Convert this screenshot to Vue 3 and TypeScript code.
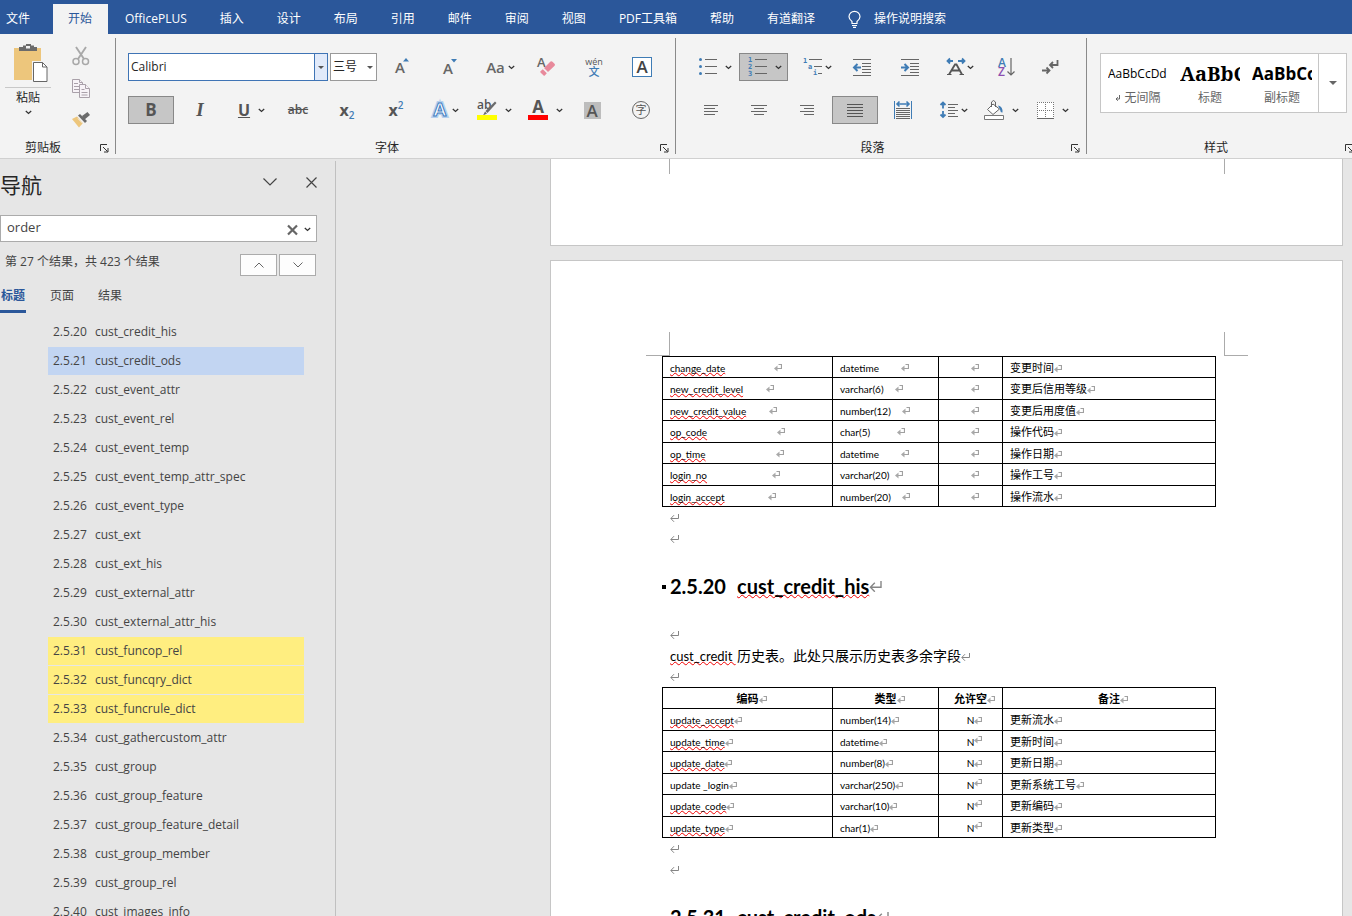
<script setup lang="ts">
import { ref } from 'vue'

interface FieldRow {
  name: string
  nameTab?: number
  type: string
  typeTab?: number
  nullable: string
  raised?: boolean
  remark: string
  plain?: boolean
}

const tabs = ['插入', '设计', '布局', '引用', '邮件', '审阅', '视图', 'PDF工具箱', '帮助', '有道翻译']
const fontName = ref('Calibri')
const fontSize = ref('三号')
const query = ref('order')

const outline: { no: string; name: string; state?: string }[] = [
  { no: '2.5.20', name: 'cust_credit_his' },
  { no: '2.5.21', name: 'cust_credit_ods', state: 'current' },
  { no: '2.5.22', name: 'cust_event_attr' },
  { no: '2.5.23', name: 'cust_event_rel' },
  { no: '2.5.24', name: 'cust_event_temp' },
  { no: '2.5.25', name: 'cust_event_temp_attr_spec' },
  { no: '2.5.26', name: 'cust_event_type' },
  { no: '2.5.27', name: 'cust_ext' },
  { no: '2.5.28', name: 'cust_ext_his' },
  { no: '2.5.29', name: 'cust_external_attr' },
  { no: '2.5.30', name: 'cust_external_attr_his' },
  { no: '2.5.31', name: 'cust_funcop_rel', state: 'hit' },
  { no: '2.5.32', name: 'cust_funcqry_dict', state: 'hit' },
  { no: '2.5.33', name: 'cust_funcrule_dict', state: 'hit' },
  { no: '2.5.34', name: 'cust_gathercustom_attr' },
  { no: '2.5.35', name: 'cust_group' },
  { no: '2.5.36', name: 'cust_group_feature' },
  { no: '2.5.37', name: 'cust_group_feature_detail' },
  { no: '2.5.38', name: 'cust_group_member' },
  { no: '2.5.39', name: 'cust_group_rel' },
  { no: '2.5.40', name: 'cust_images_info' },
]

const creditRows: FieldRow[] = [
  { name: 'change_date', nameTab: 104, type: 'datetime', typeTab: 61, nullable: '', remark: '变更时间' },
  { name: 'new_credit_level', nameTab: 96, type: 'varchar(6)', typeTab: 55, nullable: '', remark: '变更后信用等级' },
  { name: 'new_credit_value', nameTab: 99, type: 'number(12)', typeTab: 62, nullable: '', remark: '变更后用度值' },
  { name: 'op_code', nameTab: 107, type: 'char(5)', typeTab: 57, nullable: '', remark: '操作代码' },
  { name: 'op_time', nameTab: 106, type: 'datetime', typeTab: 61, nullable: '', remark: '操作日期' },
  { name: 'login_no', nameTab: 102, type: 'varchar(20)', typeTab: 55, nullable: '', remark: '操作工号' },
  { name: 'login_accept', nameTab: 98, type: 'number(20)', typeTab: 62, nullable: '', remark: '操作流水' },
]

const historyRows: FieldRow[] = [
  { name: 'update_accept', type: 'number(14)', nullable: 'N', remark: '更新流水' },
  { name: 'update_time', type: 'datetime', nullable: 'N', raised: true, remark: '更新时间' },
  { name: 'update_date', type: 'number(8)', nullable: 'N', remark: '更新日期' },
  { name: 'update _login', type: 'varchar(250)', nullable: 'N', raised: true, remark: '更新系统工号', plain: true },
  { name: 'update_code', type: 'varchar(10)', nullable: 'N', raised: true, remark: '更新编码' },
  { name: 'update_type', type: 'char(1)', nullable: 'N', raised: true, remark: '更新类型' },
]
</script>

<template>
  <div class="word">
    <svg class="defs" aria-hidden="true">
      <symbol id="ret" viewBox="0 0 8 8"><path d="M4.500 .5H7.500V4.500H1.500" fill="none" stroke="#a0a0a0" stroke-width="1.200" /><path d="M0 4.500 3.500 1.500V7.500z" fill="#a8a8a8" /></symbol>
      <symbol id="para" viewBox="0 0 9 8"><path d="M8.5 0v4.5H1M4 1.2.8 4.5 4 7.8" fill="none" stroke="#858585" /></symbol>
      <symbol id="chev" viewBox="0 0 7 5"><path d="M.8 1l2.7 2.4L6.2 1" fill="none" stroke="#333" stroke-width="1.3" /></symbol>
      <symbol id="launch" viewBox="0 0 9 9"><path d="M.5 7V.5H7M3 3l4.5 4.5M8 4v4H4" fill="none" stroke="#333" /></symbol>
    </svg>

    <nav class="tabs" aria-label="功能区">
      <button class="tab file">文件</button>
      <button class="tab active">开始</button>
      <button class="tab">OfficePLUS</button>
      <button v-for="t in tabs" :key="t" class="tab">{{ t }}</button>
      <button class="tab tell">
        <svg width="13" height="17" viewBox="0 0 13 17"><path d="M4 12.5v-2C2 9 1 8 1 5.800a5.500 5.500 0 0 1 11 0C12 8 11 9 9 10.500v2zM4 14.500h5M5 16.400h3" fill="none" stroke="#fff" stroke-width="1.200" /></svg>
        操作说明搜索
      </button>
    </nav>

    <section class="ribbon">
      <div class="group clipboard">
        <div class="clip-body">
          <button class="paste">
            <svg width="36" height="40" viewBox="0 0 36 40">
              <path d="M2 5h27v32H2z" fill="#edc67c" />
              <path d="M7 4h4V2.500h3V1h5v1.500h3V4h3v4H7z" fill="#6b6b6b" />
              <path d="M14 3h4v2.500h-4z" fill="#f3f3f3" />
              <path d="M20 18h12l5 5v18H20z" fill="#f3f3f3" />
              <path d="M21.500 19.500h9l4.500 4.500v14.500H21.500z" fill="#fff" stroke="#666" />
              <path d="M30.500 19.500V24H35" fill="none" stroke="#666" />
            </svg>
            <span class="paste-line"></span>
            <span>粘贴</span>
            <svg width="7" height="5"><use href="#chev" /></svg>
          </button>
          <div class="clip-tools">
            <button aria-label="剪切">
              <svg width="18" height="20" viewBox="0 0 18 20" fill="none" stroke="#a8a8a8" stroke-width="1.500">
                <path d="M4 1l8 12M14 1L6 13" stroke-width="1.900" /><circle cx="4" cy="15.500" r="3" /><circle cx="13.500" cy="15.500" r="3" />
              </svg>
            </button>
            <button aria-label="复制">
              <svg width="18" height="19" viewBox="0 0 18 19" fill="#f7f3f7" stroke="#a9a0a9">
                <path d="M.5 .5h7l3 3v10H.5z" /><path d="M7.500 .5v3h3M2 4.500h4M2 7.500h5M2 10.500h5" />
                <path d="M7.500 5.500h6l4 4v9h-10z" /><path d="M13.500 5.500v4h4M9.500 10.500h3M9.500 13.500h6M9.500 16h6" />
              </svg>
            </button>
            <button aria-label="格式刷">
              <svg width="18" height="16" viewBox="0 0 18 16">
                <path d="M0 7l5-2.500 6 6.500-4 4.500z" fill="#edc67c" /><path d="M6 3.500l2-1.500 7 7-2 2z" fill="#6b6b6b" /><path d="M10 4l5.500-4L18 3l-6 5z" fill="#6b6b6b" /><path d="M6 6.500l5 5" stroke="#f3f3f3" />
              </svg>
            </button>
          </div>
        </div>
        <div class="group-foot"><span class="group-name">剪贴板</span><button aria-label="剪贴板选项"><svg width="9" height="9"><use href="#launch" /></svg></button></div>
      </div>

      <div class="group font">
        <div class="row row-top">
          <div class="combo name">
            <select v-model="fontName" aria-label="字体"><option>Calibri</option></select>
            <span class="arrow"></span>
          </div>
          <div class="combo size">
            <select v-model="fontSize" aria-label="字号"><option>三号</option></select>
            <span class="arrow"></span>
          </div>
          <button class="tool" aria-label="增大字号"><svg width="14" height="18" viewBox="0 0 14 18"><text x="0" y="15" class="ga">A</text><path d="M8 3.500 11 0l3 3.500z" fill="#3f7cb5" /></svg></button>
          <button class="tool" aria-label="减小字号"><svg width="14" height="18" viewBox="0 0 14 18"><text x="0" y="16" class="ga">A</text><path d="M8 1h6l-3 3.500z" fill="#3f7cb5" /></svg></button>
          <button class="tool case-tool" aria-label="更改大小写"><span class="case">Aa</span><svg width="7" height="5"><use href="#chev" /></svg></button>
          <button class="tool" aria-label="清除格式">
            <svg width="19" height="20" viewBox="0 0 19 20"><text x="0" y="10" class="gs">A</text><path d="M7 11l6.500-6.500q1-.8 2 .2l2 2q1 1 .1 2L11 15z" fill="#e8899b" /><path d="M5.800 12.200l4 4-2 2.300q-.5.500-1.200 0L3.500 15.400q-.5-.6 0-1.200z" fill="#e8899b" /></svg>
          </button>
          <button class="tool pinyin" aria-label="拼音指南"><span>wén</span><b>文</b></button>
          <button class="tool" aria-label="字符边框"><span class="boxed">A</span></button>
        </div>
        <div class="row row-font">
          <button class="tool on bold">B</button>
          <button class="tool italic">I</button>
          <button class="tool nudged"><u class="under">U</u><svg class="far" width="7" height="5"><use href="#chev" /></svg></button>
          <button class="tool"><s class="strike">abc</s></button>
          <button class="tool script">x<sub>2</sub></button>
          <button class="tool script">x<sup>2</sup></button>
          <button class="tool" aria-label="文本效果">
            <svg width="18" height="20" viewBox="0 0 18 20"><text x="2" y="16" class="fx glow">A</text><text x="2" y="16" class="fx">A</text></svg>
            <svg width="7" height="5"><use href="#chev" /></svg>
          </button>
          <button class="tool" aria-label="突出显示">
            <svg width="20" height="20" viewBox="0 0 20 20"><text x="0" y="9" class="gh">ab</text><path d="M18 1.500l1.500 1.500-9 10-2-2z" fill="#6b6b6b" /><path d="M8 11.500l2 2-4 2z" fill="#6b6b6b" /><path d="M0 15h20v5H0z" fill="#ff0" /></svg>
            <svg class="far" width="7" height="5"><use href="#chev" /></svg>
          </button>
          <button class="tool nudged" aria-label="字体颜色">
            <svg width="20" height="20" viewBox="0 0 20 20"><text x="10" y="13" text-anchor="middle" class="gc">A</text><path d="M0 15h20v5H0z" fill="red" /></svg>
            <svg class="far" width="7" height="5"><use href="#chev" /></svg>
          </button>
          <button class="tool" aria-label="字符底纹"><span class="shaded">A</span></button>
          <button class="tool" aria-label="带圈字符"><span class="circled">字</span></button>
        </div>
        <div class="group-foot"><span class="group-name">字体</span><button aria-label="字体选项"><svg width="9" height="9"><use href="#launch" /></svg></button></div>
      </div>

      <div class="group para">
        <div class="row para-top">
          <button class="tool" aria-label="项目符号">
            <svg width="18" height="18" viewBox="0 0 18 18"><g fill="#3f7cb5"><circle cx="1.500" cy="1.500" r="1.500" /><circle cx="1.500" cy="8.500" r="1.500" /><circle cx="1.500" cy="15.500" r="1.500" /></g><path d="M6 1.500h12M6 8.500h12M6 15.500h12" stroke="#666" /></svg>
            <svg class="far" width="7" height="5"><use href="#chev" /></svg>
          </button>
          <button class="tool on" aria-label="编号">
            <svg width="19" height="18" viewBox="0 0 19 18"><g class="num"><text x="0" y="4">1</text><text x="0" y="11">2</text><text x="0" y="18">3</text></g><path d="M7 1.500h12M7 8.500h12M7 15.500h12" stroke="#666" /></svg>
            <svg class="far" width="7" height="5"><use href="#chev" /></svg>
          </button>
          <button class="tool" aria-label="多级列表">
            <svg width="19" height="19" viewBox="0 0 19 19"><g class="num"><text x="0" y="5">1</text><text x="5" y="11">a</text><text x="10" y="17">i</text></g><path d="M6 1.500h13M11 8.500h8M15 15.500h4" stroke="#666" /></svg>
            <svg width="7" height="5"><use href="#chev" /></svg>
          </button>
          <button class="tool" aria-label="减少缩进">
            <svg width="18" height="17" viewBox="0 0 18 17"><path d="M0 .5h18M9 4.500h9M9 7.500h9M9 10.500h9M9 13.500h9M0 16.500h18" stroke="#666" /><path d="M8 8.500H2M4.500 5 1 8.500 4.500 12" fill="none" stroke="#3f7cb5" stroke-width="2" /></svg>
          </button>
          <button class="tool" aria-label="增加缩进">
            <svg width="18" height="17" viewBox="0 0 18 17"><path d="M0 .5h18M9 4.500h9M9 7.500h9M9 10.500h9M9 13.500h9M0 16.500h18" stroke="#666" /><path d="M0 8.500h6M3.500 5 7 8.500 3.500 12" fill="none" stroke="#3f7cb5" stroke-width="2" /></svg>
          </button>
          <button class="tool" aria-label="中文版式">
            <svg width="20" height="18" viewBox="0 0 20 18"><path d="M7 3H2M4 .5 1.500 3 4 5.500M12 3h6M16 .5 18.500 3 16 5.500" fill="none" stroke="#3f7cb5" stroke-width="1.800" /><path d="M3 16.500 9 6.500h1.500L16 16.500M6 12.500h7.500" fill="none" stroke="#555" stroke-width="1.800" /><path d="M1 16.500h4.500M13.500 16.500H18" stroke="#555" stroke-width="1.200" /></svg>
            <svg width="7" height="5"><use href="#chev" /></svg>
          </button>
          <button class="tool" aria-label="排序">
            <svg width="17" height="19" viewBox="0 0 17 19"><text x="0" y="9" class="sort-a">A</text><text x="0" y="18" class="sort-z">Z</text><path d="M13 0v17M9.500 13.500 13 17l3.500-3.500" fill="none" stroke="#666" stroke-width="1.200" /></svg>
          </button>
          <button class="tool" aria-label="显示编辑标记">
            <svg width="17" height="15" viewBox="0 0 17 15"><path d="M15.500 0v5H8.500M11 2 8 5l3 3M0 10.500h7M4.500 7.500l3 3-3 3" fill="none" stroke="#666" stroke-width="1.800" /></svg>
          </button>
        </div>
        <div class="row para-row">
          <button class="tool" aria-label="左对齐"><svg width="14" height="11" viewBox="0 0 14 11"><path d="M0 .5h14M0 3.500h11M0 6.500h14M0 9.500h11" stroke="#666" /></svg></button>
          <button class="tool" aria-label="居中"><svg width="16" height="11" viewBox="0 0 16 11"><path d="M0 .5h16M3 3.500h10M0 6.500h16M3 9.500h10" stroke="#666" /></svg></button>
          <button class="tool" aria-label="右对齐"><svg width="14" height="11" viewBox="0 0 14 11"><path d="M0 .5h14M4 3.500h10M0 6.500h14M4 9.500h10" stroke="#666" /></svg></button>
          <button class="tool on" aria-label="两端对齐"><svg width="16" height="13" viewBox="0 0 16 13"><path d="M0 .5h16M0 3.500h16M0 6.500h16M0 9.500h16M0 12.500h16" stroke="#555" /></svg></button>
          <button class="tool" aria-label="分散对齐">
            <svg width="18" height="18" viewBox="0 0 18 18"><path d="M.5 0v18M17.500 0v18" stroke="#3f7cb5" /><path d="M3 3h12M5.500.5 3 3l2.500 2.500M12.500.5 15 3l-2.500 2.500" fill="none" stroke="#3f7cb5" stroke-width="1.600" /><path d="M2 7.500h14M2 9.500h14M2 11.500h14M2 13.500h14M2 15.500h14M2 17.500h14" stroke="#666" /></svg>
          </button>
          <button class="tool spacing" aria-label="行距">
            <svg width="18" height="18" viewBox="0 0 18 18"><path d="M3 1.500v6M.5 4 3 1.500 5.500 4M3 10v6M.5 13.500 3 16l2.500-2.500" fill="none" stroke="#3f7cb5" stroke-width="1.800" /><path d="M8 3.500h10M8 6.500h7M8 9.500h10M8 12.500h7M8 15.500h10" stroke="#666" /></svg>
            <svg width="7" height="5"><use href="#chev" /></svg>
          </button>
          <button class="tool nudged" aria-label="底纹">
            <svg width="20" height="20" viewBox="0 0 20 20"><path d="M3.500 9.500 9 4l6.500 5L9 14.500z" fill="#fff" stroke="#666" /><path d="M7.500 7V2q2-3 4 0v5" fill="none" stroke="#666" /><path d="M14 5.500q5 1 4.500 7-2 .5-2.500-3z" fill="#3f7cb5" /><path d="M.5 15.500h19v4H.5z" fill="#fff" stroke="#777" /></svg>
            <svg class="far" width="7" height="5"><use href="#chev" /></svg>
          </button>
          <button class="tool borders" aria-label="边框">
            <svg width="17" height="17" viewBox="0 0 17 17"><path d="M0 0h17v17H0z" fill="#fff" /><path d="M0 .5h17M0 8.500h17M.5 0v17M8.500 0v17M16.500 0v17" stroke="#777" stroke-dasharray="1 1" /><path d="M0 16.500h17" stroke="#666" /></svg>
            <svg class="far" width="7" height="5"><use href="#chev" /></svg>
          </button>
        </div>
        <div class="group-foot"><span class="group-name">段落</span><button aria-label="段落选项"><svg width="9" height="9"><use href="#launch" /></svg></button></div>
      </div>

      <div class="group styles">
        <div class="gallery">
          <button class="style"><span class="sample">AaBbCcDd</span><span class="style-name"><svg width="6" height="7" viewBox="0 0 6 7"><path d="M4.500 0v4H1M2.800 2.200 1 4l1.800 1.800" fill="none" stroke="#666" /></svg> 无间隔</span></button>
          <button class="style"><span class="sample title">AaBbCc</span><span class="style-name">标题</span></button>
          <button class="style"><span class="sample subtitle">AaBbCc</span><span class="style-name">副标题</span></button>
          <button class="more" aria-label="其他样式"><span class="arrow-big"></span></button>
        </div>
        <div class="group-foot"><span class="group-name">样式</span><button aria-label="样式选项"><svg width="9" height="9"><use href="#launch" /></svg></button></div>
      </div>
    </section>

    <div class="body">
      <aside class="pane">
        <header class="pane-head">
          <h1>导航</h1>
          <button aria-label="任务窗格选项"><svg width="14" height="8" viewBox="0 0 14 8"><path d="M.5.5 7 7 13.500.5" fill="none" stroke="#444" stroke-width="1.200" /></svg></button>
          <button aria-label="关闭"><svg width="11" height="11" viewBox="0 0 11 11"><path d="M.5.5l10 10M10.500.5l-10 10" stroke="#444" stroke-width="1.200" /></svg></button>
        </header>
        <div class="search">
          <input v-model="query" type="text" aria-label="搜索文档">
          <button aria-label="清除"><svg width="11" height="10" viewBox="0 0 11 10"><path d="M1 .5l9 9M10 .5l-9 9" stroke="#666" stroke-width="2.200" /></svg></button>
          <button aria-label="搜索选项"><svg width="7" height="5"><use href="#chev" /></svg></button>
        </div>
        <div class="found">
          <p>第 27 个结果，共 423 个结果</p>
          <button aria-label="上一个"><svg width="10" height="6" viewBox="0 0 10 6"><path d="M.5 5.500 5 1l4.500 4.500" fill="none" stroke="#666" /></svg></button>
          <button aria-label="下一个"><svg width="10" height="6" viewBox="0 0 10 6"><path d="M.5.5 5 5 9.500.5" fill="none" stroke="#666" /></svg></button>
        </div>
        <div class="views">
          <button class="sel">标题</button>
          <button>页面</button>
          <button>结果</button>
        </div>
        <ul class="outline">
          <li v-for="o in outline" :key="o.no"><a href="#" :class="o.state"><span>{{ o.no }}</span>{{ o.name }}</a></li>
        </ul>
      </aside>

      <main class="canvas">
        <article class="page prev">
          <div class="corners"><i></i><i></i></div>
        </article>
        <article class="page">
          <div class="corners"><i></i><i></i></div>
          <table>
            <colgroup><col class="c1"><col class="c2"><col class="c3"><col></colgroup>
            <tbody>
              <tr v-for="r in creditRows" :key="r.name">
                <td><span class="stop" :style="{ width: r.nameTab + 'px' }"><span class="typo">{{ r.name }}</span></span><svg class="ret up"><use href="#ret" /></svg></td>
                <td><span class="stop" :style="{ width: r.typeTab + 'px' }">{{ r.type }}</span><svg class="ret up"><use href="#ret" /></svg></td>
                <td class="mid"><svg class="ret up"><use href="#ret" /></svg></td>
                <td class="zh">{{ r.remark }}<svg class="ret"><use href="#ret" /></svg></td>
              </tr>
            </tbody>
          </table>
          <p class="line"><svg class="pm"><use href="#para" /></svg></p>
          <p class="line"><svg class="pm"><use href="#para" /></svg></p>
          <h2><span class="dot"></span><span class="no">2.5.20</span><span class="typo">cust_credit_his</span><svg class="hm"><use href="#para" /></svg></h2>
          <p class="line"><svg class="pm"><use href="#para" /></svg></p>
          <p class="line text"><span class="typo lead">cust_credit </span>历史表。此处只展示历史表多余字段<svg class="pm"><use href="#para" /></svg></p>
          <p class="line"><svg class="pm"><use href="#para" /></svg></p>
          <table>
            <colgroup><col class="c1"><col class="c2"><col class="c3"><col></colgroup>
            <thead>
              <tr><th v-for="h in ['编码', '类型', '允许空', '备注']" :key="h">{{ h }}<svg class="ret"><use href="#ret" /></svg></th></tr>
            </thead>
            <tbody class="shifted">
              <tr v-for="r in historyRows" :key="r.name">
                <td><span :class="{ typo: !r.plain }">{{ r.name }}</span><svg class="ret"><use href="#ret" /></svg></td>
                <td>{{ r.type }}<svg class="ret"><use href="#ret" /></svg></td>
                <td class="mid">{{ r.nullable }}<svg class="ret" :class="{ raised: r.raised }"><use href="#ret" /></svg></td>
                <td class="zh">{{ r.remark }}<svg class="ret"><use href="#ret" /></svg></td>
              </tr>
            </tbody>
          </table>
          <p class="line"><svg class="pm"><use href="#para" /></svg></p>
          <p class="line"><svg class="pm"><use href="#para" /></svg></p>
          <h2><span class="dot"></span><span class="no">2.5.31</span><span class="typo">cust_credit_ods</span><svg class="hm"><use href="#para" /></svg></h2>
        </article>
      </main>
    </div>
  </div>
</template>

<style>
body { margin: 0; }
</style>

<style scoped>
* { box-sizing: border-box; }
.word {
  height: 100vh;
  display: flex;
  flex-direction: column;
  overflow: hidden;
  background: #e6e6e6;
  color: #262626;
  font: 12px/16px "Open Sans", "Noto Sans CJK SC", sans-serif;
}
.defs { position: absolute; width: 0; height: 0; }
svg { flex: none; overflow: visible; }
button { border: 0; padding: 0; background: none; font: inherit; color: inherit; }
h1, h2, p, ul { margin: 0; padding: 0; }

.tabs { flex: none; display: flex; gap: 1px; height: 34px; padding-top: 4px; background: #2b579a; color: #fff; }
.tab { padding: 0 16px; white-space: nowrap; }
.tab.file { padding: 0 22px 0 6px; }
.tab.active { background: #f3f3f3; color: #2b579a; padding: 0 16px 0 15px; }
.tell { display: flex; align-items: center; gap: 13px; }

.ribbon { flex: none; display: flex; height: 125px; background: #f3f3f3; border-bottom: 1px solid #d0d0d0; overflow: hidden; }
.group { position: relative; flex: none; display: flex; flex-direction: column; gap: 15px; padding-top: 19px; }
.group:not(.styles)::after { content: ""; position: absolute; right: 0; top: 4px; bottom: 4px; width: 1px; background: #8a8a8a; }
.group-foot { display: flex; align-items: center; height: 16px; margin-top: auto; margin-bottom: 2px; }
.group-name { flex: 1; text-align: center; padding-right: 14px; }
.group-foot button { width: 16px; height: 16px; padding-top: 4px; display: flex; justify-content: flex-start; }
.clipboard { width: 116px; padding-top: 9px; gap: 0; }
.clip-body { display: flex; }
.paste { width: 56px; display: flex; flex-direction: column; align-items: center; color: #262626; }
.paste svg:first-child { margin-left: 3px; }
.paste-line { width: 46px; height: 1px; margin: 4px 0 2px; background: #c8c8c8; }
.paste svg:last-child { margin-top: 4px; }
.clip-tools { width: 50px; padding-top: 3px; display: flex; flex-direction: column; align-items: center; gap: 12px; }
.clip-tools button { display: flex; height: 20px; align-items: center; }

.row { display: flex; height: 28px; }
.tool { width: 46px; height: 28px; display: flex; align-items: center; justify-content: center; gap: 3px; color: #555; }
.tool.on { background: #c6c6c6; border: 1px solid #888; }
.tool.nudged { padding-left: 5px; }
.far { margin-left: 5px; }
.font { width: 560px; padding-left: 12px; }
.row-top { gap: 2px; }
.row-font { gap: 3px; }
.case-tool { padding-left: 5px; }
.combo { display: flex; background: #fff; border: 1px solid #999; }
.combo select { flex: 1; min-width: 0; border: 0; padding: 0 2px; background: none; appearance: none; color: #262626; font: inherit; }
.combo.name { width: 200px; border-color: #3f74b5; }
.combo.size { width: 47px; }
.arrow { width: 13px; display: grid; place-items: center; }
.combo.name .arrow { border-left: 1px solid #3f74b5; background: #e1eafa; }
.arrow::before, .arrow-big::before { content: ""; display: block; border: 3px solid transparent; border-top-color: #555; border-bottom: 0; }
.arrow-big::before { border-width: 4px; border-bottom: 0; border-top-color: #666; }
.ga { font: 600 15px "Open Sans", sans-serif; fill: #666; }
.gs { font: 600 13px "Open Sans", sans-serif; fill: #666; }
.gh { font: 600 12px "Open Sans", sans-serif; fill: #555; }
.gc { font: 700 17px "Open Sans", sans-serif; fill: #555; }
.fx { font: 700 19px "Liberation Sans", sans-serif; fill: #fff; stroke: #3f7cc0; stroke-width: 1px; }
.fx.glow { stroke: #b5d0ee; stroke-width: 4px; }
.case { font-size: 15px; font-weight: 600; color: #666; }
.pinyin { flex-direction: column; gap: 0; font-size: 9px; line-height: 9px; }
.pinyin b { color: #3f7cb5; font-size: 11px; line-height: 11px; font-weight: 500; }
.boxed { width: 20px; height: 20px; border: 1px solid #3f7cb5; background: #fff; font: 600 17px/18px "Open Sans", sans-serif; text-align: center; color: #444; }
.bold { font-size: 17px; font-weight: 700; }
.italic { font: italic 700 19px "Liberation Serif", serif; }
.under { font-size: 16px; font-weight: 700; }
.strike { font-size: 12px; font-weight: 600; }
.script { gap: 0; font-size: 16px; font-weight: 700; }
.script sub, .script sup { font-size: 10px; line-height: 10px; color: #3f7cb5; font-weight: 600; }
.script sub { align-self: flex-end; margin-bottom: 4px; }
.script sup { align-self: flex-start; margin-top: 4px; }
.shaded { width: 17px; height: 17px; background: #bdbdbd; font: 600 17px/17px "Open Sans", sans-serif; text-align: center; }
.circled { width: 18px; height: 18px; border: 1px solid #666; border-radius: 50%; font-size: 11px; line-height: 15px; text-align: center; }

.para { width: 411px; padding-left: 12px; }
.para-row { gap: 2px; }
.para-top { padding-left: 3px; }
.para-top .tool:nth-child(1) { width: 48px; }
.para-top .tool:nth-child(2) { width: 49px; padding-left: 3px; }
.para-top .tool:nth-child(3) { width: 52px; justify-content: flex-end; padding-right: 8px; }
.para-top .tool:nth-child(4) { width: 44px; }
.para-top .tool:nth-child(5) { width: 52px; }
.para-top .tool:nth-child(6) { width: 48px; gap: 1px; }
.para-top .tool:nth-child(n+7) { width: 44px; }
.tool.spacing { padding-left: 5px; }
.tool.borders { padding-left: 12px; }
.num { font: 700 7px "DejaVu Sans Mono", monospace; fill: #3f7cb5; }
.sort-a, .sort-z { font: 600 12px "Open Sans", sans-serif; fill: #3f7cb5; }
.sort-z { fill: #8b4fb0; }

.styles { flex: 1 0 274px; padding-left: 13px; }
.styles .group-foot { margin-left: -13px; }
.styles .group-name { padding-right: 0; }
.gallery { display: flex; width: 247px; height: 60px; padding-left: 1px; border: 1px solid #c6c6c6; background: #fff; }
.style { width: 72px; padding: 1px 6px 0; display: flex; flex-direction: column; align-items: center; }
.sample { width: 60px; height: 34px; overflow: hidden; white-space: nowrap; color: #000; font: 12px/38px "Open Sans", sans-serif; text-align: left; }
.sample.title { font: 700 20px/38px "Noto Serif", "Liberation Serif", serif; }
.sample.subtitle { font: 700 17px/38px "Open Sans", sans-serif; }
.style-name { color: #666; line-height: 18px; white-space: nowrap; }
.more { flex: 1; border-left: 1px solid #c6c6c6; display: grid; place-items: center; }

.body { flex: 1; min-height: 0; display: flex; }
.pane { flex: none; width: 336px; margin-top: 2px; border-right: 1px solid #c0c0c0; overflow: hidden; color: #444; }
.pane-head { display: flex; align-items: center; height: 54px; padding: 0 18px 12px 0; }
.pane-head h1 { flex: 1; padding-top: 6px; font-size: 21px; line-height: 28px; font-weight: 400; color: #262626; }
.pane-head button { display: flex; margin-left: 29px; }
.search { display: flex; align-items: center; width: 317px; height: 27px; padding-right: 5px; background: #fff; border: 1px solid #ababab; }
.search input { flex: 1; min-width: 0; height: 22px; border: 0; padding: 0 6px 3px; outline: 0; font: inherit; font-size: 13px; color: #444; background: none; }
.search button { display: flex; margin-left: 6px; padding-top: 2px; }
.found { display: flex; gap: 2px; width: 316px; height: 34px; padding-top: 12px; }
.found p { flex: 1; padding-left: 5px; line-height: 16px; }
.found button { width: 37px; height: 22px; display: grid; place-items: center; background: #fdfdfd; border: 1px solid #ababab; }
.views { display: flex; gap: 24px; height: 37px; padding-top: 10px; }
.views button { height: 27px; padding-bottom: 7px; }
.views .sel { color: #2b579a; font-weight: 700; border-bottom: 3px solid #2b579a; padding: 0 1px 4px 1px; }
.outline { list-style: none; margin: 5px 31px 0 48px; }
.outline li { margin-bottom: 1px; }
.outline a { display: block; height: 28px; padding-left: 5px; line-height: 27px; color: #444; text-decoration: none; white-space: nowrap; }
.outline a span { display: inline-block; width: 42px; }
.outline .current { background: #c2d5f2; }
.outline .hit { background: #ffee80; }

.canvas { flex: 1; min-width: 0; overflow: hidden; }
.page { width: 793px; margin: 0 9px 0 auto; padding: 71px 0 40px; background: #fff; border: 1px solid #c6c6c6; }
.prev { height: 87px; margin-bottom: 14px; padding: 0; border-top: 0; }
.corners { display: flex; justify-content: space-between; margin: 0 94px 0 95px; }
.corners i { width: 24px; height: 24px; border: solid #ababab; border-width: 0 1px 1px 0; }
.corners i:last-child { border-width: 0 0 1px 1px; }
.prev .corners i { height: 15px; border-bottom: 0; }
table { width: 554px; margin-left: 111px; table-layout: fixed; border-collapse: collapse; color: #000; font: 10px/14px Lato, "Noto Sans CJK SC", sans-serif; }
.c1 { width: 170px; }
.c2 { width: 106px; }
.c3 { width: 64px; }
td, th { height: 21px; padding: 4px 7px 0; border: 1px solid #000; text-align: left; vertical-align: top; white-space: nowrap; }
tr:nth-child(even) td, .shifted tr:nth-child(odd) td { height: 22px; }
.shifted tr:nth-child(even) td { height: 21px; }
th { text-align: center; font-size: 11px; }
.mid { text-align: center; }
.zh { font-size: 11px; }
.stop { display: inline-block; }
.typo { text-decoration: underline wavy #f00000 1px; text-underline-offset: 0; text-decoration-skip-ink: none; }
.ret { width: 8px; height: 8px; vertical-align: -1px; }
.ret.up { vertical-align: 0; }
.ret.raised { vertical-align: 2px; }
th .ret, .mid .ret { margin-right: -8px; }
.line { height: 21px; padding-left: 119px; line-height: 21px; color: #000; }
.pm { width: 9px; height: 8px; }
.text { font: 14px/22px Lato, "Noto Sans CJK SC", sans-serif; white-space: pre; }
.lead { display: inline-block; min-width: 67px; font-size: 13px; }
h2 { display: flex; align-items: center; margin: 24px 0 24px 111px; font: 700 20px/27px Lato, sans-serif; color: #000; }
.dot { width: 4px; height: 4px; margin-right: 4px; background: #000; }
.no { width: 67px; }
.hm { width: 13px; height: 11px; }
</style>
